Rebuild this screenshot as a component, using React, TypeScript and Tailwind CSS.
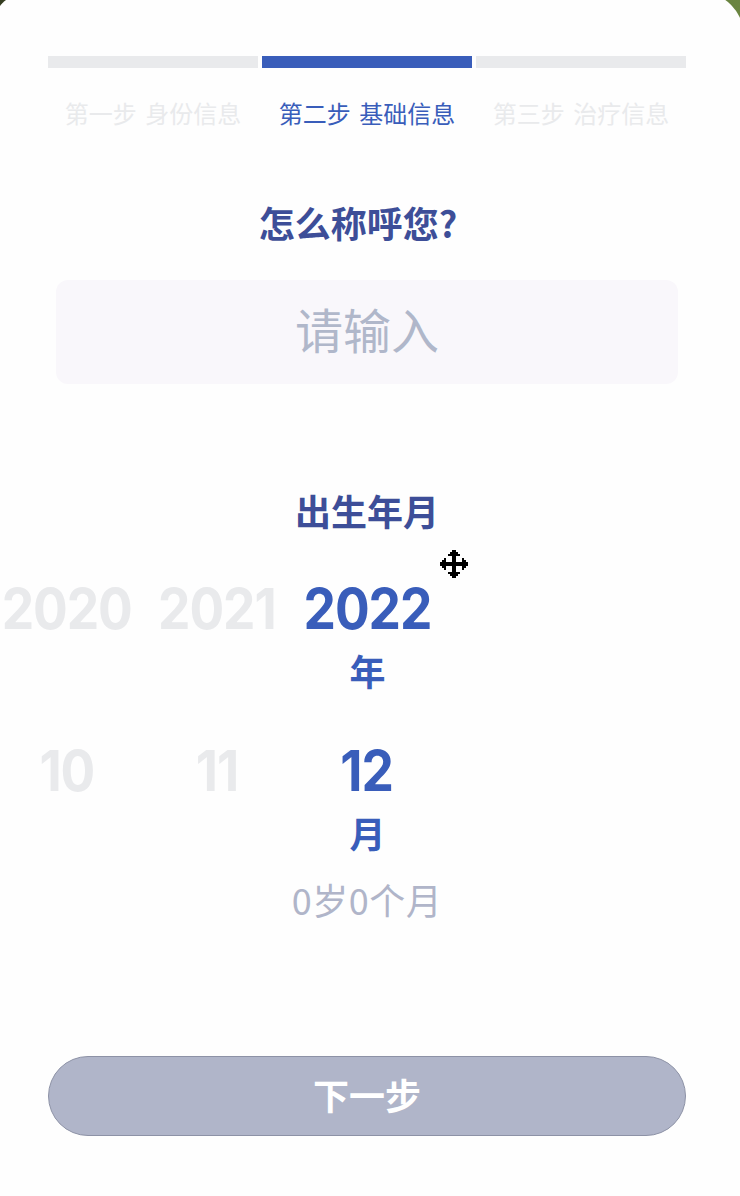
import clsx from "clsx";

const steps = [
  { label: "第一步 身份信息", active: false },
  { label: "第二步 基础信息", active: true },
  { label: "第三步 治疗信息", active: false },
];

const years = ["2020", "2021", "2022"];
const months = ["10", "11", "12"];

function Steps() {
  return (
    <div className="flex gap-1">
      {steps.map((step) => (
        <div key={step.label} className="w-[210px]">
          <div className={clsx("h-3", step.active ? "bg-[#395dba]" : "bg-[#e9eaec]")} />
          <div
            className={clsx(
              "mt-[27px] text-center text-2xl leading-9 [word-spacing:3px] whitespace-nowrap",
              step.active ? "text-[#395dba]" : "text-[#e9eaec]"
            )}
          >
            {step.label}
          </div>
        </div>
      ))}
    </div>
  );
}

function Picker({ items, selected, unit }: { items: string[]; selected: string; unit: string }) {
  return (
    <div className="text-[#395dba]">
      <div className="-ml-14 flex font-['Inter',sans-serif] text-[56px] leading-[68px] font-bold tracking-[-1.2px]">
        {items.map((item) => (
          <div
            key={item}
            className={clsx("flex w-[150px] shrink-0 justify-center", item !== selected && "text-[#e9eaec]")}
          >
            <span className="scale-x-[0.92]">{item}</span>
          </div>
        ))}
      </div>
      <div className="mt-0.5 pl-px text-center text-4xl leading-[50px] font-bold">{unit}</div>
    </div>
  );
}

// pixel style move cursor, drawn on a 14x14 grid
function MoveCursor() {
  return (
    <svg
      className="absolute top-[558px] left-[448px]"
      width="28"
      height="28"
      viewBox="0 0 14 14"
      shapeRendering="crispEdges"
    >
      <path d="M6 0h2v1h1v1h1v1H8v3h3V4h1v1h1v1h1v2h-1v1h-1v1h-1V8H8v3h2v1H9v1H8v1H6v-1H5v-1H4v-1h2V8H3v2H2V9H1V8H0V6h1V5h1V4h1v2h3V3H4V2h1V1h1z" />
    </svg>
  );
}

export default function App() {
  return (
    <div className="h-[1196px] w-[740px] overflow-hidden bg-linear-to-r from-[#343d20] to-[#6a8540] font-['Noto_Sans_CJK_SC',sans-serif]">
      {/* the sheet is slightly larger than the screen, only the tips of its corners are cut */}
      <div className="relative -mt-2 -mr-1 -ml-2 h-[1204px] rounded-tl-[37px] rounded-tr-[44px] bg-[#fefefe] pt-16 pr-[58px] pl-14">
        <Steps />

        <h2 className="mt-[66px] pr-[18px] text-center text-4xl leading-[50px] font-bold text-[#3d4e98]">
          怎么称呼您?
        </h2>
        <input
          className="mx-2 mt-[33px] block h-[104px] w-[622px] rounded-xl bg-[#f9f7fb] pb-2 text-center text-5xl text-[#b0b7ca] outline-none placeholder:text-[#b0b7ca]"
          placeholder="请输入"
        />

        <h2 className="mt-[101px] text-center text-4xl leading-[50px] font-bold text-[#3d4e98]">
          出生年月
        </h2>
        <div className="mt-10">
          <Picker items={years} selected="2022" unit="年" />
        </div>
        <div className="mt-[42px]">
          <Picker items={months} selected="12" unit="月" />
        </div>
        <div className="mt-[17px] text-center text-4xl leading-[50px] tracking-[0.5px] text-[#b0b5c9]">
          0岁0个月
        </div>

        <button className="mt-[132px] block h-20 w-full rounded-full border border-[#8d92a6] bg-[#b0b5c9] pb-1 text-4xl font-bold text-white">
          下一步
        </button>

        <MoveCursor />
      </div>
    </div>
  );
}
